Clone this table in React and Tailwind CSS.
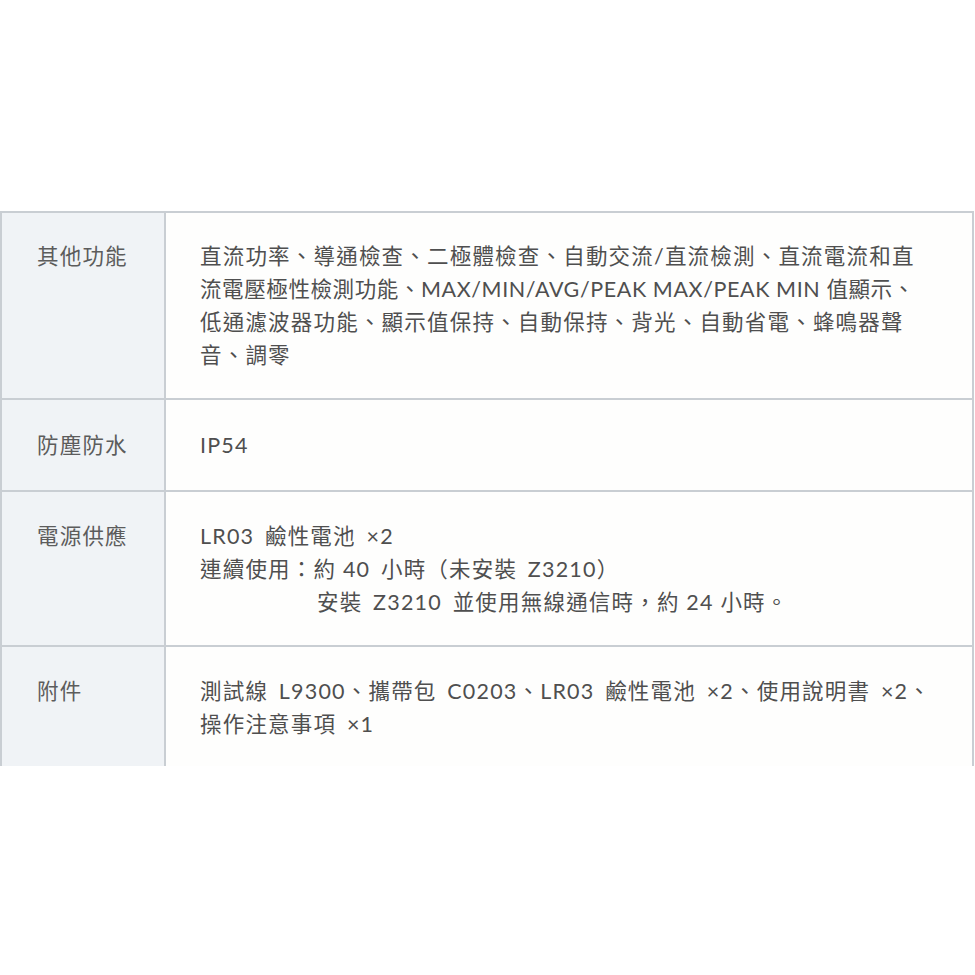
const rows = [
  {
    label: "其他功能",
    lines: [
      "直流功率、導通檢查、二極體檢查、自動交流/直流檢測、直流電流和直",
      { tight: true, text: "流電壓極性檢測功能、MAX/MIN/AVG/PEAK MAX/PEAK MIN 值顯示、" },
      "低通濾波器功能、顯示值保持、自動保持、背光、自動省電、蜂鳴器聲",
      "音、調零",
    ],
    pad: "pt-[27px] pb-[26px]",
  },
  { label: "防塵防水", lines: ["IP54"], pad: "pt-[29px] pb-[28px]" },
  {
    label: "電源供應",
    lines: [
      "LR03  鹼性電池  ×2",
      "連續使用：約 40  小時（未安裝  Z3210）",
      { indent: true, text: "安裝  Z3210  並使用無線通信時，約 24 小時。" },
    ],
    pad: "pt-[28px] pb-[26px]",
  },
  {
    label: "附件",
    lines: [
      "測試線  L9300、攜帶包  C0203、LR03  鹼性電池  ×2、使用說明書  ×2、",
      "操作注意事項  ×1",
    ],
    pad: "pt-[28px] pb-[25px]",
    last: true,
  },
];

// a double space in the data marks a wider gap between latin and CJK text
const Spaced = ({ text }) => {
  const parts = text.split("  ");
  return parts.map((part, i) => (
    <span key={i}>
      {i > 0 && <span className="inline-block w-[4px]" />}
      {i > 0 ? " " + part : part}
    </span>
  ));
};

const App = () => {
  return (
    <div
      className="w-[975px] h-[975px] bg-white pt-[211px]"
      style={{ fontFamily: "Lato, 'Noto Sans CJK TC', sans-serif" }}
    >
      <div className="w-[974px] border-t-2 border-l-2 border-r-2 border-[#c9ced3]">
        {rows.map((row) => (
          <div
            key={row.label}
            className={`grid grid-cols-[164px_1fr] ${row.last ? "" : "border-b-2 border-[#c9ced3]"}`}
          >
            <div className={`bg-[#f0f3f6] border-r-2 border-[#c9ced3] pl-[35px] ${row.pad} text-[21.5px] leading-[33px] tracking-[1.2px] text-[#5c5c5c]`}>
              {row.label}
            </div>
            <div
              className={`bg-[#fefefd] pl-[34px] ${row.pad} text-[21.5px] leading-[33px] tracking-[1.2px] text-[#4f4f4f] whitespace-pre`}
            >
              {row.lines.map((line, i) =>
                typeof line === "string" ? (
                  <div key={i}>
                    <Spaced text={line} />
                  </div>
                ) : line.indent ? (
                  <div key={i} className="pl-[117px]">
                    <Spaced text={line.text} />
                  </div>
                ) : (
                  <div key={i} className="tracking-[0.6px]">
                    {line.text}
                  </div>
                )
              )}
            </div>
          </div>
        ))}
      </div>
    </div>
  );
};

export default App;
